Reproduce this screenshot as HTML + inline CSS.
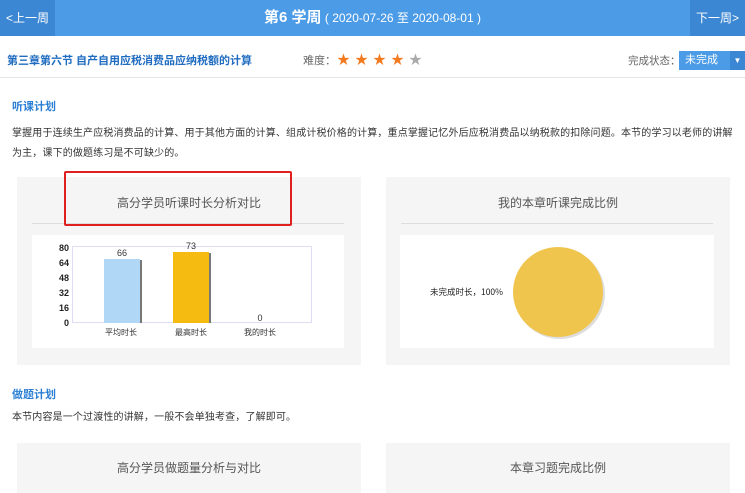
<!DOCTYPE html>
<html><head><meta charset="utf-8"><style>
*{margin:0;padding:0;box-sizing:border-box}
body{width:745px;height:485px;overflow:hidden;background:#fff;font-family:"Liberation Sans","Noto Sans CJK SC",sans-serif;color:#333;position:relative}
.a{position:absolute;white-space:nowrap}
.hdr{position:absolute;left:0;top:0;width:745px;height:36px;background:#4c9be6}
.side{position:absolute;top:0;height:36px;width:55px;background:#3c87d3;color:#fff;font-size:12px;line-height:36px;text-align:center}
.panel{position:absolute;background:#f5f5f5}
.ptitle{position:absolute;left:0;width:100%;text-align:center;font-size:12px;color:#555}
.star{position:absolute;top:53px;font-size:13px;line-height:13px;color:#f47a20}
.sec{font-size:11px;color:#2a7fd4;font-weight:bold}
.txt{font-size:10px;color:#333;letter-spacing:0.15px}
</style></head><body>
<div class="hdr"></div>
<div class="side" style="left:0">&lt;上一周</div>
<div class="side" style="left:690px">下一周&gt;</div>
<div class="a" style="left:0;width:745px;top:0;line-height:36px;text-align:center;color:#fff;font-size:15px;font-weight:bold">第6 学周<span style="font-size:12px;font-weight:normal"> ( 2020-07-26 至 2020-08-01 )</span></div>

<div class="a" style="left:7px;top:52px;font-size:11px;font-weight:bold;color:#1f6cc0">第三章第六节 自产自用应税消费品应纳税额的计算</div>
<div class="a" style="left:303px;top:52px;font-size:11px;color:#666">难度：</div>
<div class="star" style="left:337px">★</div>
<div class="star" style="left:355px">★</div>
<div class="star" style="left:373px">★</div>
<div class="star" style="left:391px">★</div>
<div class="star" style="left:409px;color:#aaa">★</div>
<div class="a" style="left:628px;top:53px;font-size:10.5px;color:#666">完成状态：</div>
<div class="a" style="left:679px;top:51px;width:66px;height:19px;background:#4c9be6"></div>
<div class="a" style="left:730px;top:51px;width:15px;height:19px;background:#3c87d3;color:#fff;font-size:8px;line-height:19px;text-align:center">▼</div>
<div class="a" style="left:685px;top:51px;line-height:19px;font-size:11px;color:#fff">未完成</div>
<div class="a" style="left:0;top:77px;width:745px;height:1px;background:#e6e6e6"></div>

<div class="a sec" style="left:12px;top:98px">听课计划</div>
<div class="a txt" style="left:12px;top:124px">掌握用于连续生产应税消费品的计算、用于其他方面的计算、组成计税价格的计算，重点掌握记忆外后应税消费品以纳税款的扣除问题。本节的学习以老师的讲解</div>
<div class="a txt" style="left:12px;top:144px">为主，课下的做题练习是不可缺少的。</div>

<div class="panel" style="left:17px;top:177px;width:344px;height:188px">
 <div class="ptitle" style="top:17px">高分学员听课时长分析对比</div>
 <div class="a" style="left:15px;top:46px;width:312px;height:1px;background:#ddd"></div>
 <div class="a" style="left:15px;top:58px;width:312px;height:113px;background:#fff"></div>
</div>
<div class="a" style="left:64px;top:171px;width:228px;height:55px;border:2px solid #e02020;border-radius:2px"></div>
<svg class="a" style="left:32px;top:235px" width="312" height="113">
 <rect x="40.5" y="11.5" width="239" height="76" fill="none" stroke="#ddddf4"/>
 <g font-family="Liberation Sans" font-size="9" font-weight="bold" fill="#222" text-anchor="end">
  <text x="37" y="16">80</text><text x="37" y="31">64</text><text x="37" y="46">48</text><text x="37" y="61">32</text><text x="37" y="76">16</text><text x="37" y="91">0</text>
 </g>
 <rect x="74" y="25" width="36" height="63" fill="#777"/>
 <rect x="72" y="24" width="36" height="64" fill="#b0d8f6"/>
 <rect x="143" y="18" width="36" height="70" fill="#777"/>
 <rect x="141" y="17" width="36" height="71" fill="#f5bb11"/>
 <g font-family="Liberation Sans" font-size="9" fill="#333" text-anchor="middle">
  <text x="90" y="21">66</text><text x="159" y="14">73</text><text x="228" y="86">0</text>
 </g>
 <g font-family="Noto Sans CJK SC" font-size="8" fill="#333" text-anchor="middle">
  <text x="89" y="100">平均时长</text><text x="159" y="100">最高时长</text><text x="228" y="100">我的时长</text>
 </g>
</svg>

<div class="panel" style="left:386px;top:177px;width:344px;height:188px">
 <div class="ptitle" style="top:17px">我的本章听课完成比例</div>
 <div class="a" style="left:15px;top:46px;width:312px;height:1px;background:#ddd"></div>
 <div class="a" style="left:14px;top:58px;width:314px;height:113px;background:#fff"></div>
</div>
<svg class="a" style="left:400px;top:235px" width="314" height="113">
 <circle cx="160" cy="59" r="45" fill="#ddd"/>
 <circle cx="158" cy="57" r="45" fill="#efc54e"/>
 <text x="30" y="60" font-family="Noto Sans CJK SC" font-size="8.5" fill="#222">未完成时长，100%</text>
</svg>

<div class="a sec" style="left:12px;top:386px">做题计划</div>
<div class="a txt" style="left:12px;top:408px">本节内容是一个过渡性的讲解，一般不会单独考查，了解即可。</div>
<div class="panel" style="left:17px;top:443px;width:344px;height:50px">
 <div class="ptitle" style="top:16px">高分学员做题量分析与对比</div>
</div>
<div class="panel" style="left:386px;top:443px;width:344px;height:50px">
 <div class="ptitle" style="top:16px">本章习题完成比例</div>
</div>
</body></html>
